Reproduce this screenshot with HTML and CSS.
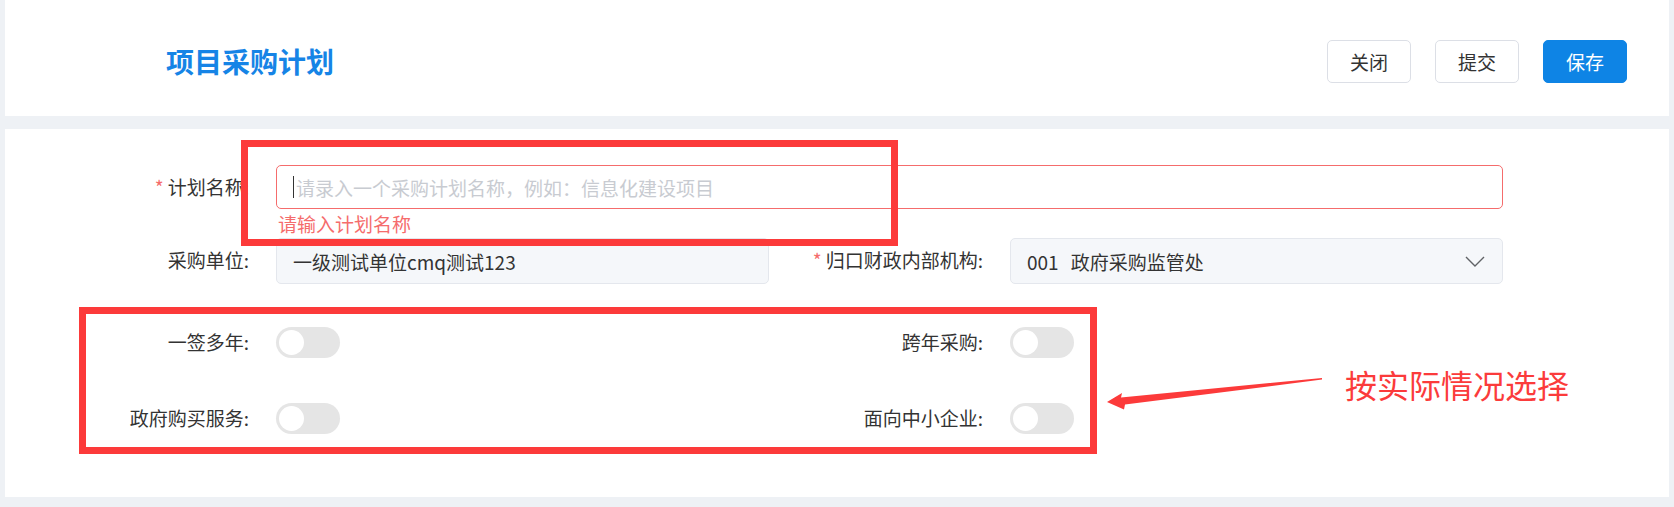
FILE: index.html
```html
<!DOCTYPE html>
<html lang="zh-CN">
<head>
<meta charset="utf-8">
<title>项目采购计划</title>
<link rel="stylesheet" href="styles.css">
</head>
<body>
<div class="page">
  <header class="header">
    <h1 class="title">项目采购计划</h1>
    <div class="actions">
      <button class="btn">关闭</button>
      <button class="btn">提交</button>
      <button class="btn primary">保存</button>
    </div>
  </header>
  <main class="panel">
    <div class="row">
      <div class="field wide">
        <label class="label"><span class="req">*</span>计划名称:</label>
        <div class="control">
          <div class="input error"><span class="caret"></span><span class="ph">请录入一个采购计划名称，例如：信息化建设项目</span></div>
          <div class="err-msg">请输入计划名称</div>
        </div>
      </div>
    </div>
    <div class="row">
      <div class="field">
        <label class="label">采购单位:</label>
        <div class="control">
          <div class="input tall">一级测试单位cmq测试123</div>
        </div>
      </div>
      <div class="field">
        <label class="label"><span class="req">*</span>归口财政内部机构:</label>
        <div class="control">
          <div class="input tall select"><span class="sel-text"><span class="code">001</span>政府采购监管处</span>
            <svg class="chev" width="20" height="11" viewBox="0 0 20 11"><path d="M1 1 L10 10 L19 1" fill="none" stroke="#606266" stroke-width="1.4"/></svg>
          </div>
        </div>
      </div>
    </div>
    <div class="row row-sw first">
      <div class="field">
        <label class="label">一签多年:</label>
        <div class="control"><span class="switch"></span></div>
      </div>
      <div class="field">
        <label class="label">跨年采购:</label>
        <div class="control"><span class="switch"></span></div>
      </div>
    </div>
    <div class="row row-sw second">
      <div class="field">
        <label class="label">政府购买服务:</label>
        <div class="control"><span class="switch"></span></div>
      </div>
      <div class="field">
        <label class="label">面向中小企业:</label>
        <div class="control"><span class="switch"></span></div>
      </div>
    </div>

    <div class="mark mark-1"></div>
    <div class="mark mark-2"></div>
    <svg class="arrow" width="230" height="45" viewBox="0 0 230 45">
      <polygon points="7,32 22,23 21,27.5 222,8 222,9.6 25,34.5 24,39.5" fill="#fc3a3a"/>
    </svg>
    <div class="note">按实际情况选择</div>
  </main>
</div>
</body>
</html>
```
FILE: styles.css
```css
html, body {
  margin: 0;
  padding: 0;
}
body {
  background: #eef1f5;
  font-family: "Noto Sans CJK SC", "Noto Sans", sans-serif;
  width: 1674px;
  height: 507px;
  overflow: hidden;
}
.page {
  padding: 0 5px;
}
.header {
  background: #fff;
  height: 116px;
  box-sizing: border-box;
  padding: 40px 42px 0 161px;
  display: flex;
  justify-content: space-between;
  align-items: flex-start;
}
.title {
  margin: 0;
  font-size: 28px;
  font-weight: 700;
  color: #1684e6;
  line-height: 43px;
}
.actions {
  display: flex;
  gap: 24px;
}
.btn {
  width: 84px;
  height: 43px;
  padding: 0;
  border: 1px solid #dcdfe6;
  border-radius: 5px;
  background: #fff;
  color: #333;
  font-family: "Noto Sans CJK SC", sans-serif;
  font-size: 19px;
}
.btn.primary {
  background: #0e84e5;
  border-color: #0e84e5;
  color: #fff;
}
.panel {
  position: relative;
  margin-top: 13px;
  background: #fff;
  height: 368px;
  box-sizing: border-box;
  padding: 36px 0 0 71px;
}
.row {
  display: flex;
}
.field {
  display: flex;
  align-items: flex-start;
}
.field + .field {
  margin-left: 41px;
}
.label {
  width: 200px;
  box-sizing: border-box;
  padding-right: 27px;
  text-align: right;
  white-space: nowrap;
  font-size: 19px;
  color: #333;
  line-height: 44px;
}
.req {
  color: #f56c6c;
  margin-right: 4px;
}
.control {
  width: 493px;
}
.field.wide .control {
  width: 1227px;
}
.input {
  height: 44px;
  box-sizing: border-box;
  border: 1px solid #e4e7ed;
  border-radius: 5px;
  background: #f5f7fa;
  padding-left: 16px;
  display: flex;
  align-items: center;
  font-size: 19px;
  color: #333;
}
.input.tall {
  height: 46px;
}
.input.error {
  background: #fff;
  border-color: #f56c6c;
}
.caret {
  width: 1px;
  height: 22px;
  background: #333;
  margin-right: 2px;
}
.ph {
  color: #c8cbd1;
}
.err-msg {
  height: 29px;
  box-sizing: border-box;
  padding-top: 4px;
  line-height: 22px;
  font-size: 19px;
  color: #f56c6c;
  padding-left: 2px;
}
.select {
  justify-content: space-between;
  padding-right: 17px;
}
.code {
  margin-right: 12px;
}
.chev {
  display: block;
}
.row-sw .field {
  align-items: center;
  height: 46px;
}
.row-sw .label {
  line-height: 46px;
}
.row-sw .control {
  display: flex;
  align-items: center;
}
.row-sw.first {
  margin-top: 35px;
}
.row-sw.second {
  margin-top: 30px;
}
.switch {
  position: relative;
  display: block;
  width: 64px;
  height: 31px;
  border-radius: 16px;
  background: #e5e5e5;
}
.switch::after {
  content: "";
  position: absolute;
  left: 3px;
  top: 3px;
  width: 25px;
  height: 25px;
  border-radius: 50%;
  background: #fff;
}
.mark {
  position: absolute;
  border: 7px solid #fc3a3a;
  box-sizing: border-box;
}
.mark-1 {
  left: 236px;
  top: 11px;
  width: 657px;
  height: 106px;
}
.mark-2 {
  left: 74px;
  top: 178px;
  width: 1018px;
  height: 147px;
}
.arrow {
  position: absolute;
  left: 1095px;
  top: 241px;
}
.note {
  position: absolute;
  left: 1340px;
  top: 239px;
  font-size: 32px;
  line-height: 32px;
  color: #fb3b3b;
  white-space: nowrap;
}
```
